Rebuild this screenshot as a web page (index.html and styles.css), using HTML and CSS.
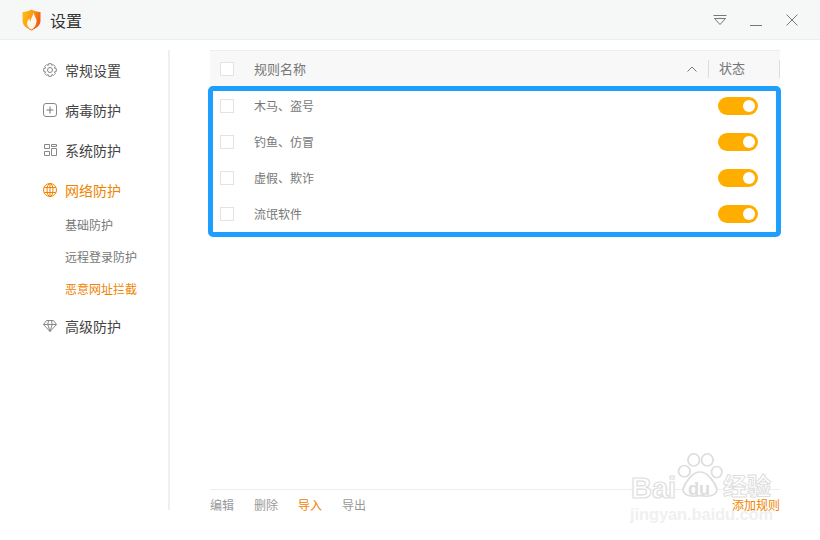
FILE: index.html
```html
<!DOCTYPE html>
<html lang="zh-CN">
<head>
<meta charset="utf-8">
<title>设置</title>
<link rel="stylesheet" href="styles.css">
</head>
<body>
<div class="app">
  <header class="titlebar">
    <svg class="logo" width="19" height="22" viewBox="0 0 19 22">
      <defs><linearGradient id="lg" x1="0" y1="0" x2="1" y2=".35"><stop offset="0" stop-color="#ffc21a"/><stop offset=".55" stop-color="#fb9a10"/><stop offset="1" stop-color="#ee5f18"/></linearGradient></defs>
      <path d="M.5 3 C4 3 7 2 9.500 .5 C12 2 15 3 18.500 3 L18.500 12 C18.500 16.500 14 19.500 9.500 21.500 C5 19.500 .5 16.500 .5 12 Z" fill="url(#lg)"/>
      <path d="M11.500 3.500 C12 7 15 9 14.500 13 C14 16.500 12 19 9.500 20.500 C6.500 19 4.500 16.500 5 13.500 C5.500 11.500 6.500 10.500 7.500 9.500 C7.500 11 8 12 8.500 12.500 C8.500 9.500 11 7 11.500 3.500 Z" fill="#fff" fill-opacity=".92"/>
    </svg>
    <span class="app-title">设置</span>
    <div class="win-btns">
      <svg width="14" height="12" viewBox="0 0 14 12"><path d="M.5 1.500H13.500M1.500 4.500H12.500L7 10.500Z" fill="none" stroke="#777" stroke-width="1"/></svg>
      <svg width="14" height="12" viewBox="0 0 14 12"><path d="M1 11.500H13" fill="none" stroke="#777" stroke-width="1"/></svg>
      <svg width="14" height="14" viewBox="0 0 14 14"><path d="M1.500 1.500L12.500 12.500M12.500 1.500L1.500 12.500" fill="none" stroke="#777" stroke-width="1"/></svg>
    </div>
  </header>
  <div class="main">
    <nav class="sidebar">
      <div class="nav-item">
        <svg class="nav-icon" width="14" height="14" viewBox="0 0 14 14"><path d="M5.600 .7H8.400L8.800 2.400L10.300 1.600L12.300 3.600L11.400 5.100L13.300 5.600V8.400L11.400 8.900L12.300 10.400L10.300 12.400L8.800 11.600L8.400 13.300H5.600L5.200 11.600L3.700 12.400L1.700 10.400L2.600 8.900L.7 8.400V5.600L2.600 5.100L1.700 3.600L3.700 1.600L5.200 2.400Z" fill="none" stroke="#888" stroke-linejoin="round"/><circle cx="7" cy="7" r="2.500" fill="none" stroke="#888"/></svg>
        <span>常规设置</span>
      </div>
      <div class="nav-item">
        <svg class="nav-icon" width="14" height="14" viewBox="0 0 14 14"><rect x=".5" y=".5" width="13" height="13" rx="2.500" fill="none" stroke="#888"/><path d="M3.500 7H10.500M7 3.500V10.500" fill="none" stroke="#777"/></svg>
        <span>病毒防护</span>
      </div>
      <div class="nav-item">
        <svg class="nav-icon" width="14" height="14" viewBox="0 0 14 14"><path d="M1.500 1.500H6.500V5.500H1.500ZM1.500 8.500H6.500V12.500H1.500ZM8.500 1.500H13.500V3.500H8.500ZM8.500 5.500H13.500V12.500H8.500Z" fill="none" stroke="#888"/></svg>
        <span>系统防护</span>
      </div>
      <div class="nav-item is-active">
        <svg class="nav-icon" width="14" height="14" viewBox="0 0 14 14"><g fill="none" stroke="#f08300"><circle cx="7" cy="7" r="6.500"/><ellipse cx="7" cy="7" rx="3" ry="6.500"/><path d="M1.200 4.500H12.800M1.200 9.500H12.800M7 .5V13.500"/></g></svg>
        <span>网络防护</span>
      </div>
      <div class="sub-list">
        <div class="sub-item">基础防护</div>
        <div class="sub-item">远程登录防护</div>
        <div class="sub-item is-active">恶意网址拦截</div>
      </div>
      <div class="nav-item">
        <svg class="nav-icon" width="14" height="14" viewBox="0 0 14 14"><path d="M3.500 1.500H10.500L13.500 5.500L7 12.500L.5 5.500ZM.5 5.500H13.500M4.800 5.500L7 12.500L9.200 5.500M4.800 5.500L5.500 1.500M9.200 5.500L8.500 1.500" fill="none" stroke="#888"/></svg>
        <span>高级防护</span>
      </div>
    </nav>
    <section class="content">
      <div class="table">
        <div class="thead">
          <span class="check"></span>
          <span class="col-name">规则名称</span>
          <svg class="sort" width="10" height="6" viewBox="0 0 10 6"><path d="M.5 5.500L5 1L9.500 5.500" fill="none" stroke="#777"/></svg>
          <span class="col-state">状态</span>
        </div>
        <div class="rows">
          <div class="row"><span class="check"></span><span class="col-name">木马、盗号</span><span class="toggle"></span></div>
          <div class="row"><span class="check"></span><span class="col-name">钓鱼、仿冒</span><span class="toggle"></span></div>
          <div class="row"><span class="check"></span><span class="col-name">虚假、欺诈</span><span class="toggle"></span></div>
          <div class="row"><span class="check"></span><span class="col-name">流氓软件</span><span class="toggle"></span></div>
        </div>
        <div class="highlight"></div>
      </div>
      <footer class="actions">
        <span>编辑</span>
        <span>删除</span>
        <span class="orange">导入</span>
        <span>导出</span>
        <span class="orange add">添加规则</span>
      </footer>
    </section>
  </div>
  <div class="watermark">
    <span class="wm-bai">Bai</span>
    <svg class="wm-paw" width="46" height="45" viewBox="0 0 44 52" preserveAspectRatio="none">
      <g fill="#fff" stroke="#dedede" stroke-width="1.800">
        <ellipse cx="7" cy="21" rx="5.500" ry="6.500"/>
        <ellipse cx="16" cy="8" rx="5.500" ry="7"/>
        <ellipse cx="29" cy="8" rx="5.500" ry="7"/>
        <ellipse cx="38" cy="22" rx="5" ry="6.500"/>
        <path d="M22 22C29 22 36 33 38 41C39 48 33 50 28 50C24 49 20 49 16 50C10 50 5 47 6 41C8 33 15 22 22 22Z"/>
      </g>
    </svg>
    <span class="wm-du">du</span>
    <span class="wm-jy">经验</span>
    <span class="wm-url">jingyan.baidu.com</span>
  </div>
</div>
</body>
</html>
```

FILE: styles.css
```css
* { box-sizing: border-box; }
html, body { margin: 0; padding: 0; background: #fff; }
body { font-family: "Noto Sans CJK SC", "Liberation Sans", sans-serif; color: #444; }
.app { position: relative; width: 820px; height: 540px; overflow: hidden; display: flex; flex-direction: column; }

.titlebar { height: 40px; flex: none; display: flex; align-items: center; padding: 0 21px 0 22px; background: #f6f8f8; border-bottom: 1px solid #eeeeee; }
.logo { flex: none; margin-right: 9px; }
.app-title { font-size: 16px; color: #333; }
.win-btns { margin-left: auto; display: flex; align-items: center; gap: 22px; }

.main { flex: 1; display: flex; padding-top: 10px; }
.sidebar { width: 170px; height: 460px; flex: none; border-right: 2px solid #efefef; padding-left: 43px; }
.nav-item { height: 40px; display: flex; align-items: center; gap: 8px; font-size: 14px; color: #444; }
.nav-item.is-active { color: #f08300; }
.nav-icon { flex: none; }
.sub-list { padding-left: 22px; }
.sub-item { height: 32px; line-height: 30px; font-size: 12px; color: #777; }
.sub-item.is-active { color: #f08300; }

.content { width: 570px; margin-left: 40px; height: 470px; display: flex; flex-direction: column; }
.table { position: relative; flex: 1; }
.thead { height: 37px; display: flex; align-items: center; padding-left: 10px; background: #f8f8f8; border-top: 1px solid #eeeeee; font-size: 13px; color: #777; }
.check { width: 14px; height: 14px; flex: none; background: #fff; border: 1px solid #e3e3e3; margin-right: 20px; }
.col-name { flex: 1; margin-bottom: 2px; }
.sort { flex: none; margin-right: 11px; }
.col-state { flex: none; width: 72px; height: 18px; line-height: 16px; padding-left: 10px; border-left: 1px solid #dddddd; border-right: 1px solid #dddddd; }
.rows { padding-top: 1px; }
.row { height: 36px; display: flex; align-items: center; padding: 0 22px 0 10px; font-size: 12px; color: #777; }
.toggle { position: relative; width: 40px; height: 18px; flex: none; border-radius: 9px; background: #ffae00; }
.toggle::after { content: ""; position: absolute; top: 3px; right: 3px; width: 12px; height: 12px; border-radius: 50%; background: #fff; }
.highlight { position: absolute; left: -2px; top: 36px; width: 573px; height: 151px; border: 5px solid #1e9fff; border-radius: 5px; pointer-events: none; }

.actions { height: 31px; flex: none; display: flex; align-items: center; gap: 20px; padding-bottom: 2px; border-top: 1px solid #eeeeee; font-size: 12px; color: #999; }
.orange { color: #f08300; }
.add { margin-left: auto; position: relative; z-index: 2; }

.watermark { position: absolute; left: 628px; top: 450px; width: 190px; height: 80px; pointer-events: none; }
.wm-bai { position: absolute; left: 3px; top: 16px; font: bold 29px/44px "Liberation Sans", sans-serif; color: #fff; -webkit-text-stroke: 1.2px #dedede; }
.wm-paw { position: absolute; left: 49px; top: 3px; }
.wm-du { position: absolute; left: 60px; top: 29px; font: bold 18px/20px "Liberation Sans", sans-serif; color: #dddddd; }
.wm-jy { position: absolute; left: 95px; top: 17px; font-size: 24px; line-height: 36px; font-weight: 700; color: #fff; -webkit-text-stroke: 1px #dedede; }
.wm-url { position: absolute; left: 2px; top: 54px; font: bold 16.500px/20px "Liberation Sans", sans-serif; color: #f0f0f0; letter-spacing: -.1px; }
```
